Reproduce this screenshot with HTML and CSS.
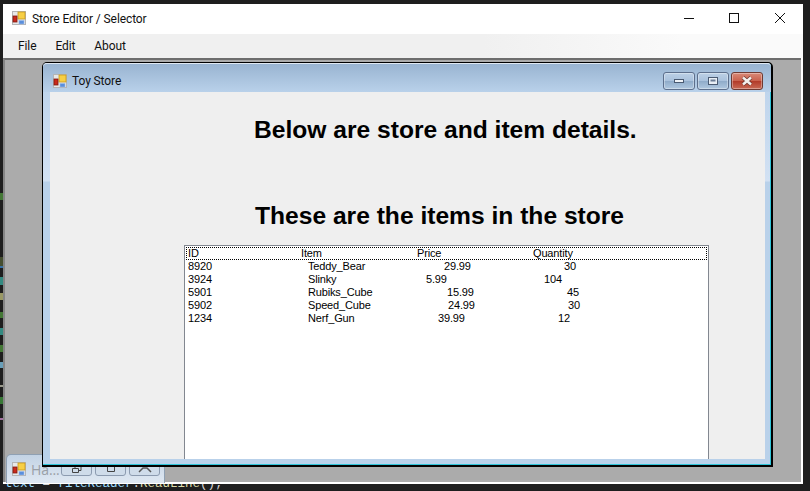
FILE: index.html
```html
<!DOCTYPE html>
<html lang="en">
<head>
    <meta charset="UTF-8">
    <meta name="viewport" content="width=device-width, initial-scale=1.0">
    <title>Store Editor / Selector</title>
    <link rel="stylesheet" href="styles.css">
</head>
<body>
    <!-- shared form icon -->
    <svg class="defs" width="0" height="0">
        <symbol id="form-icon" viewBox="0 0 14 14">
            <rect x="0.5" y="0.5" width="13" height="13" fill="#e8e8e8" stroke="#b5b5b5"/>
            <rect x="6" y="1" width="7" height="7" fill="#f7cf45" stroke="#c99a1c" stroke-width="0.8"/>
            <rect x="1" y="5" width="4" height="6" fill="#c92a1c" stroke="#7d1a12" stroke-width="0.8"/>
            <rect x="7" y="9.5" width="5" height="3.5" fill="#5b8fdc" stroke="#9dbcea" stroke-width="0.6"/>
        </symbol>
    </svg>

    <!-- bits of the code editor behind the app -->
    <svg class="edge-marks" width="3" height="491">
        <rect x="0" y="193" width="3" height="7" fill="#4e8f3c"/>
        <rect x="0" y="257" width="3" height="9" fill="#4f5a35"/>
        <rect x="0" y="266" width="3" height="2" fill="#3f86c9"/>
        <rect x="0" y="277" width="3" height="8" fill="#3aa59a"/>
        <rect x="0" y="293" width="3" height="7" fill="#b9b878"/>
        <rect x="0" y="312" width="3" height="6" fill="#4e8f3c"/>
        <rect x="0" y="328" width="3" height="7" fill="#3aa59a"/>
        <rect x="0" y="345" width="3" height="7" fill="#4e8f3c"/>
        <rect x="0" y="362" width="3" height="6" fill="#7cc0e0"/>
        <rect x="0" y="385" width="3" height="2" fill="#b9b9a8"/>
        <rect x="0" y="397" width="3" height="7" fill="#3f8f3c"/>
        <rect x="0" y="418" width="3" height="2" fill="#c586c0"/>
    </svg>
    <p class="code-line"><span class="var">text</span> = <span class="var">fileReader</span>.<span class="fn">ReadLine</span>();</p>

    <div class="app">
        <header class="app-title">
            <svg class="icon app-icon" width="14" height="14"><use href="#form-icon"/></svg>
            <span class="app-name">Store Editor / Selector</span>
            <div class="caption-btns">
                <svg width="46" height="30" viewBox="0 0 46 30"><path d="M18 14.500h10" stroke="#111" fill="none"/></svg>
                <svg width="46" height="30" viewBox="0 0 46 30"><rect x="17.500" y="9.500" width="9" height="9" stroke="#111" fill="none"/></svg>
                <svg width="46" height="30" viewBox="0 0 46 30"><path d="M17 9l10 10M27 9l-10 10" stroke="#111" fill="none"/></svg>
            </div>
        </header>
        <nav class="menu">
            <span>File</span>
            <span>Edit</span>
            <span>About</span>
        </nav>
        <main class="mdi">
            <!-- minimized child, mostly behind Toy Store -->
            <div class="min-child">
                <svg class="icon" width="14" height="14"><use href="#form-icon"/></svg>
                <span class="min-name">Ha...</span>
                <div class="min-btns">
                    <span class="min-btn">
                        <svg width="12" height="8" viewBox="0 0 12 8"><path d="M1.500 2.500h6v4h-6zM4 2.500v-2h6v4h-2" fill="none" stroke="#444"/></svg>
                    </span>
                    <span class="min-btn">
                        <svg width="12" height="8" viewBox="0 0 12 8"><path d="M2.500 0v5.500h7v-5.500" fill="none" stroke="#444"/></svg>
                    </span>
                    <span class="min-btn">
                        <svg width="14" height="8" viewBox="0 0 14 8"><path d="M1 6l4-4h4l4 4" fill="none" stroke="#555" stroke-width="1.500"/></svg>
                    </span>
                </div>
            </div>

            <section class="child">
                <div class="child-title">
                    <svg class="icon" width="14" height="14"><use href="#form-icon"/></svg>
                    <span class="child-name">Toy Store</span>
                    <div class="child-btns">
                        <span class="cbtn">
                            <svg width="12" height="6" viewBox="0 0 12 6"><rect x="1.500" y="1.500" width="9" height="3" fill="#eef2f7" stroke="#4a5a72"/></svg>
                        </span>
                        <span class="cbtn">
                            <svg width="12" height="10" viewBox="0 0 12 10"><rect x="1.500" y="1.500" width="9" height="7" fill="#e8eef5" stroke="#4a5a72"/><rect x="3.500" y="3.500" width="5" height="2" fill="#6b7c96"/></svg>
                        </span>
                        <span class="cbtn cbtn-close">
                            <svg width="14" height="10" viewBox="0 0 14 10"><path d="M3 1.500l8 7M11 1.500l-8 7" stroke="#6e3a32" stroke-width="4"/><path d="M3 1.500l8 7M11 1.500l-8 7" stroke="#f4f1ee" stroke-width="2.400"/></svg>
                        </span>
                    </div>
                </div>
                <div class="client">
                    <h1 class="head-store">Below are store and item details.</h1>
                    <h1 class="head-items">These are the items in the store</h1>
                    <div class="listbox">
                        <div class="row row-head"><span>ID</span><span>Item</span><span>Price</span><span>Quantity</span></div>
                        <div class="row row-teddy"><span>8920</span><span>Teddy_Bear</span><span>29.99</span><span>30</span></div>
                        <div class="row row-slinky"><span>3924</span><span>Slinky</span><span>5.99</span><span>104</span></div>
                        <div class="row row-rubiks"><span>5901</span><span>Rubiks_Cube</span><span>15.99</span><span>45</span></div>
                        <div class="row row-speed"><span>5902</span><span>Speed_Cube</span><span>24.99</span><span>30</span></div>
                        <div class="row row-nerf"><span>1234</span><span>Nerf_Gun</span><span>39.99</span><span>12</span></div>
                    </div>
                </div>
            </section>
        </main>
    </div>
</body>
</html>
```

FILE: styles.css
```css
body { margin: 0; width: 810px; height: 491px; background-color: #1e1e1e; overflow: hidden; position: relative; font-family: Roboto, "Open Sans", sans-serif; font-size: 12px; letter-spacing: -0.1px; color: #111; }
.defs { position: absolute; }
.icon { flex: none; display: block; }

.edge-marks { position: absolute; left: 0; top: 0; opacity: 0.8; }
.code-line { position: absolute; left: 5px; top: 477px; margin: 0; font-family: "Liberation Mono", monospace; font-size: 12.5px; letter-spacing: 0; line-height: 14px; color: #d4d4d4; white-space: pre; }
.var { color: #9cdcfe; }
.fn { color: #dcdcaa; }

.app { position: absolute; left: 3px; top: 4px; width: 800px; height: 480px; background: white; display: flex; flex-direction: column; }
.app-title { height: 30px; display: flex; align-items: center; padding-left: 9px; }
.app-icon { margin-bottom: 2px; }
.app-name { margin-left: 6px; }
.caption-btns { margin-left: auto; display: flex; margin-right: -1px; }
.caption-btns svg { display: block; }
.menu { height: 24px; background: linear-gradient(to right, #f0f0f0 60%, #fafafa 85%); display: flex; align-items: center; gap: 19px; padding-left: 15px; }

.mdi { flex: 1; position: relative; margin: 0 2px 2px 0; background: #ababab; border-top: 2px solid #6d6d6d; border-left: 2px solid #858585; }

.child { position: absolute; left: 37px; top: 2px; width: 731px; height: 405px; box-sizing: border-box; border: 1px solid black; border-bottom-width: 2px; border-right-width: 2px; border-radius: 5px 5px 0 0; background: linear-gradient(to bottom, #b9d1ea 0, #d2e1f3 118px, #b9d1ea 119px); display: flex; flex-direction: column; box-shadow: inset -1px -1px 0 #2fc4d8; }
.child-title { height: 29px; box-sizing: border-box; flex: none; display: flex; align-items: center; padding: 5px 0 0 10px; background: linear-gradient(to bottom, #99b4d1, #b9d1ea); border-top: 1px solid #dfe8f2; border-radius: 4px 4px 0 0; }
.child-name { margin-left: 5px; }
.child-btns { margin-left: auto; margin-right: 8px; display: flex; gap: 2px; }
.cbtn { width: 32px; height: 18px; box-sizing: border-box; border: 1px solid #5d6f8c; border-radius: 3px; background: linear-gradient(to bottom, #bcd0e6 0, #a9c1dc 50%, #8fabc9 51%, #b0c8e0 100%); display: flex; align-items: center; justify-content: center; box-shadow: inset 0 0 0 1px rgba(255, 255, 255, 0.35); }
.cbtn-close { background: linear-gradient(to bottom, #d98a78 0, #c9604c 50%, #b23a28 51%, #c96a55 100%); border-color: #6e3a32; }
.client { flex: 1; margin: 0 6px 6px 7px; background: #efefef; overflow: hidden; display: flex; flex-direction: column; }

h1 { margin: 0; font-family: "Liberation Sans", Arial, sans-serif; font-size: 24.6px; font-weight: bold; letter-spacing: 0; line-height: 28px; color: black; }
.head-store { margin: 24px 0 0 204px; }
.head-items { margin: 58px 0 0 205px; }

.listbox { flex: 1; margin: 15px 0 0 134px; width: 525px; box-sizing: border-box; background: white; border: 1px solid #828790; border-bottom: none; padding: 1px; font-family: "Liberation Sans", Arial, sans-serif; font-size: 11px; letter-spacing: -0.15px; line-height: 13px; color: black; }
.row { display: grid; padding-left: 2px; height: 13px; white-space: nowrap; }
.row-head { grid-template-columns: 113px 116px 116px auto; outline: 1px dotted black; outline-offset: -1px; }
.row-teddy { grid-template-columns: 120px 136px 120px auto; }
.row-slinky { grid-template-columns: 120px 118px 118px auto; }
.row-rubiks { grid-template-columns: 120px 139px 120px auto; }
.row-speed { grid-template-columns: 120px 140px 120px auto; }
.row-nerf { grid-template-columns: 120px 130px 120px auto; }

.min-child { position: absolute; left: 1px; top: 394px; width: 159px; height: 29px; box-sizing: border-box; border: 1px solid #8fa0b3; border-bottom: none; border-radius: 5px 3px 0 0; background: linear-gradient(to bottom, #c3d3e5, #dfe8f2); display: flex; align-items: center; padding-left: 5px; }
.min-name { margin-left: 5px; font-family: "Open Sans", sans-serif; font-size: 14px; color: #9a9fa6; }
.min-btns { margin-left: auto; margin-right: 4px; display: flex; gap: 3px; align-self: flex-start; margin-top: 3px; }
.min-btn { width: 31px; height: 18px; box-sizing: border-box; border: 1px solid #8c9bb0; border-radius: 3px; background: #cfdcea; display: flex; align-items: flex-end; justify-content: center; padding-bottom: 1px; }
```
